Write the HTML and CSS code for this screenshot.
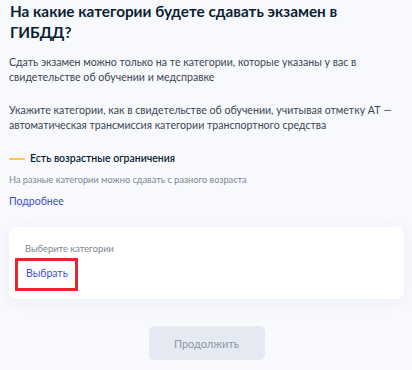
FILE: index.html
```html
<!DOCTYPE html>
<html lang="ru">
<head>
<meta charset="utf-8">
<link rel="stylesheet" href="styles.css">
</head>
<body>
<main class="page">
  <h1 class="title">На какие категории будете сдавать экзамен в ГИБДД?</h1>
  <p class="text">Сдать экзамен можно только на те категории, которые указаны у вас в свидетельстве об обучении и медсправке</p>
  <p class="text text-second">Укажите категории, как в свидетельстве об обучении, учитывая отметку АТ — автоматическая трансмиссия категории транспортного средства</p>
  <div class="notice">
    <span class="notice-bar"></span>
    <span class="notice-title">Есть возрастные ограничения</span>
  </div>
  <p class="hint">На разные категории можно сдавать с разного возраста</p>
  <a class="link more" href="#">Подробнее</a>
  <section class="card">
    <div class="card-label">Выберите категории</div>
    <a class="link choose" href="#">Выбрать</a>
  </section>
  <div class="actions">
    <button class="btn" type="button" disabled>Продолжить</button>
  </div>
</main>
</body>
</html>
```

FILE: styles.css
```css
html, body {
  margin: 0;
  padding: 0;
}
body {
  background: #f8f9fd;
  font-family: Lato, "Noto Sans", sans-serif;
  color: #0b1f33;
  width: 412px;
  height: 370px;
  overflow: hidden;
}
.page {
  padding: 1px 8px 0 9px;
  display: flex;
  flex-direction: column;
}
.title {
  margin: 0 0 0 1px;
  max-width: 370px;
  font-size: 15.3px;
  line-height: 21px;
  font-weight: 700;
  color: #0b1f33;
}
.text {
  margin: 12px 0 0;
  font-size: 10.6px;
  line-height: 15px;
  color: #3a4653;
}
.text-second {
  margin-top: 18px;
}
.notice {
  display: flex;
  align-items: center;
  gap: 5px;
  margin-top: 18px;
}
.notice-bar {
  width: 16px;
  height: 2px;
  background: #fdc73e;
  border-radius: 1px;
}
.notice-title {
  font-size: 10.5px;
  line-height: 15px;
  font-weight: 600;
  color: #0b1f33;
}
.hint {
  margin: 7px 0 0;
  font-size: 9.2px;
  line-height: 13px;
  color: #7c8591;
}
.link {
  color: #3a50d8;
  text-decoration: none;
}
.more {
  margin-top: 8px;
  font-size: 10.5px;
  line-height: 15px;
  align-self: flex-start;
}
.card {
  margin-top: 18px;
  background: #fff;
  border-radius: 8px;
  box-shadow: 0 3px 14px rgba(40, 80, 150, 0.07);
  padding: 15px 16px 8px 5px;
  display: flex;
  flex-direction: column;
  align-items: flex-start;
}
.card-label {
  margin-left: 11px;
  font-size: 9.3px;
  line-height: 13px;
  color: #7c8591;
}
.choose {
  margin-top: 3px;
  font-size: 10.5px;
  line-height: 15px;
  padding: 5px 7px 7px 8px;
  border: 3px solid #e8262d;
  margin-left: 1px;
}
.actions {
  display: flex;
  justify-content: center;
  margin-top: 27px;
}
.btn {
  width: 116px;
  height: 34px;
  border: none;
  border-radius: 6px;
  background: #e4e9f2;
  color: #8e97a3;
  font-family: Lato, "Noto Sans", sans-serif;
  font-size: 11px;
}
```
